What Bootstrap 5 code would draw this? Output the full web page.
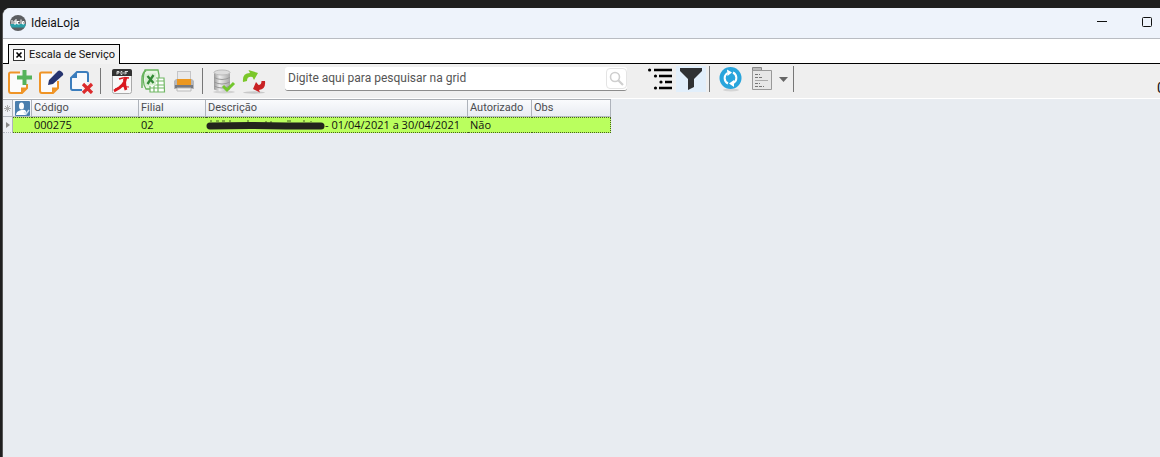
<!DOCTYPE html>
<html lang="pt-BR">
<head>
<meta charset="utf-8">
<meta name="viewport" content="width=device-width, initial-scale=1">
<title>IdeiaLoja</title>
<link href="https://cdn.jsdelivr.net/npm/bootstrap@5.3.0/dist/css/bootstrap.min.css" rel="stylesheet">
<style>
html{height:100%}
body{background:#1f1f1f;font-family:Roboto,"Open Sans",sans-serif;font-size:11px;line-height:16px;color:#111;padding:8px 0 0 2px}
button{padding:0;border:0;background:transparent}
.app-window{background:#e8ecf1;border-top-left-radius:8px;overflow:hidden;border-left:1px solid #555}
.title-bar{height:31px;background:#eef3fb;border-bottom:1px solid #b9bcc2;padding-left:7px}
.app-name{font-size:12px;line-height:16px;padding-left:5px}
.win-btn{width:45px;height:30px}
.win-controls{margin-right:-10px}
.tab-strip{height:25px;background:#fff;border-bottom:1px solid #000;padding:5px 5px 0}
.doc-tab{height:20px;margin-bottom:-1px;background:#f3f3f3;border:1px solid #000;border-bottom:0;padding:0 4px}
.tool-bar{height:35px;background:#efefef;border-bottom:1px solid #fff;padding-left:1px}
.tool-btn{width:31px;height:34px;flex:none;display:flex;align-items:center;justify-content:center}
.filter-btn{width:30px;height:26px;margin-bottom:4px;background:#e2effb}
.flag-btn{margin-bottom:4px}
.caret-btn{width:13px}
.tool-sep{width:1px;height:26px;background:#777;margin:0 5px 0 3px;flex:none}
.search-box{width:342px;height:24px;margin:0 18px 5px 15px;background:#fff;border-bottom:1px solid #8c8c8c;border-radius:3px}
.search-box input{border:0;outline:0;background:transparent;padding:0 0 0 3px;font-size:12px;line-height:20px;min-width:0}
.search-box input::placeholder{color:#555;opacity:1}
.search-btn{width:21px;height:21px;border:1px solid #e4e4e4;border-radius:4px;display:flex;align-items:center;justify-content:center}
.counter{width:3px;overflow:hidden;font-size:14px;padding-top:14px}
.data-grid{width:608px;table-layout:fixed;border-collapse:separate;border-spacing:0;border-top:1px solid #a9adb3}
.data-grid th,.data-grid td{line-height:16px;padding:0 2px;white-space:nowrap;overflow:hidden}
.data-grid th{font-weight:400;color:#4a4c50;background:linear-gradient(#fafbfd,#e9ecf2);border-right:1px solid #aeb3bb;border-bottom:1px solid #b5bac2}
.data-grid td{font-family:"Open Sans","Noto Sans",sans-serif;line-height:14px;background:#baff5e;border-top:1px dotted #466020;border-bottom:1px dotted #466020}
.data-grid td:last-child{border-right:1px dotted #466020}
.data-grid .row-mark{background:#eef0f4;border-color:#b5bac2;border-top:0;border-right:1px solid #aeb3bb;padding:0;text-align:center;color:#666}
.data-grid .icon-cell{padding:0}
.data-grid .glyph{display:block;margin:auto}
.redacted{flex:none}
</style>
<script src="https://cdn.jsdelivr.net/npm/bootstrap@5.3.0/dist/js/bootstrap.bundle.min.js"></script>
</head>
<body class="min-vh-100 d-flex flex-column">
<div class="app-window flex-grow-1">
  <header class="title-bar d-flex align-items-center">
    <svg width="16" height="16" viewBox="0 0 16 16" aria-hidden="true"><circle cx="8" cy="8" r="8" fill="#5c5e61"/><path d="M.3 9h15.400a8 8 0 0 1-1.200 3.500H1.500A8 8 0 0 1 .3 9z" fill="#2a9fa8"/><path d="M2 5v4M4 6h2v3H4zM6 4v5M7.500 6.500h2M7.500 6v3h2M11 4.500V9M12.500 6.500H14V9h-1.500z" stroke="#fff" fill="none"/></svg>
    <span class="app-name flex-grow-1">IdeiaLoja</span>
    <div class="win-controls d-flex">
      <button class="win-btn" aria-label="Minimizar"><svg width="11" height="11"><path d="M0 3.500h10" stroke="#111"/></svg></button>
      <button class="win-btn" aria-label="Maximizar"><svg width="11" height="13"><rect x=".5" y=".5" width="9" height="9" rx="1" fill="none" stroke="#111"/></svg></button>
    </div>
  </header>

  <nav class="tab-strip d-flex">
    <div class="doc-tab d-flex align-items-center">
      <button class="d-flex" aria-label="Fechar aba"><svg width="12" height="12"><rect x=".5" y=".5" width="11" height="11" fill="#fff" stroke="#333"/><path d="M3.500 3.500l5 5m0-5l-5 5" stroke="#000" stroke-width="1.600"/></svg></button>
      <span class="ps-1">Escala de Serviço</span>
    </div>
  </nav>

  <div class="tool-bar d-flex align-items-center">
    <button class="tool-btn" aria-label="Novo"><svg width="26" height="26" viewBox="0 0 26 26"><path d="M13 4.500H3.500Q2 4.500 2 6v16.500Q2 25 4 25h11l5-5v-4" fill="#fbfbfb" stroke="#ef9426" stroke-width="2"/><path d="M14 25v-5.500h6z" fill="#ef9426"/><path d="M15.500 2h4v5.500h5.500v4h-5.500V17h-4v-5.500H10v-4h5.500z" fill="#55b35b"/></svg></button>
    <button class="tool-btn" aria-label="Editar"><svg width="26" height="26" viewBox="0 0 26 26"><path d="M14 4.500H3.500Q2 4.500 2 6v16.500Q2 25 4 25h11l5-5v-7" fill="#fbfbfb" stroke="#ef9426" stroke-width="2"/><path d="M14 25v-5.500h6z" fill="#ef9426"/><path d="M10 17l1-5 9-9q1.500-1.500 4 1t0 4l-9 8z" fill="#26346f"/></svg></button>
    <button class="tool-btn" aria-label="Excluir"><svg width="26" height="26" viewBox="0 0 26 26"><path d="M13 22H3.500Q2 22 2 20V10l6-6h9q2 0 2 2v8" fill="#f7f9fc" stroke="#3b7dbd" stroke-width="2"/><path d="M2 10h6V4z" fill="#3b7dbd"/><path d="M14 16l9 9m0-9l-9 9" stroke="#dc2b2d" stroke-width="3.200"/></svg></button>
    <span class="tool-sep"></span>
    <button class="tool-btn" aria-label="Exportar PDF"><svg width="22" height="26" viewBox="0 0 22 26"><rect x="1.500" y="1.500" width="19" height="24" rx="2" fill="#f8f8f8" stroke="#aaa"/><path d="M1 3q0-2 2-2h16q2 0 2 2v5H1z" fill="#333"/><path d="M6 6.500v-3h2v1.500H6M10 3.500h1l1 1v1l-1 1h-1zM14 6.500v-3h3M14 5h2" stroke="#ddd" fill="none"/><path d="M8 11q6-2 10-1" fill="none" stroke="#d9181f" stroke-width="1.500"/><path d="M15 9q-1 9-12 14M13.500 11q0 7 1.500 11" fill="none" stroke="#d9181f" stroke-width="2.800"/><path d="M4 21q6-4 14-2" fill="none" stroke="#d9181f"/></svg></button>
    <button class="tool-btn" aria-label="Exportar Excel"><svg width="26" height="26" viewBox="0 0 26 26"><path d="M5 2h13l1 5v14H6q-5-8-1-19z" fill="#e9f5e5" stroke="#67b45c" stroke-width="1.300"/><path d="M2 20V11q0-6 4-8.500" fill="none" stroke="#67b45c" stroke-width="1.500"/><path d="M9 10h15l.5 14H10V18M10 20h14M18 10v14M14 13h10M14 17h10M14 18v6" fill="#fff" stroke="#70b764" stroke-width="1.200"/><path d="M5 6l11-1v12l-11 1z" fill="#d9efd3"/><path d="M7.500 8l6 7m0-8l-6 9" stroke="#338a36" stroke-width="2.300"/></svg></button>
    <button class="tool-btn" aria-label="Imprimir"><svg width="22" height="26" viewBox="0 0 22 26"><rect x="4.500" y="3.500" width="13" height="8" fill="#e9e9ea" stroke="#c5c5c7"/><path d="M3 11h16l2 2v8H1v-8z" fill="#b5b7bb"/><path d="M4 11h14v6H4z" fill="#ec9821"/><rect x="2" y="17" width="18" height="3" fill="#777a80"/><path d="M4 20h14v3H4z" fill="#f4f4f4" stroke="#bbb"/></svg></button>
    <span class="tool-sep"></span>
    <button class="tool-btn" aria-label="Gravar dados"><svg width="24" height="26" viewBox="0 0 24 26"><defs><linearGradient id="metal"><stop stop-color="#999"/><stop offset=".35" stop-color="#eee"/><stop offset="1" stop-color="#a7a7a7"/></linearGradient></defs><ellipse cx="12" cy="24" rx="11" ry="1.500" fill="#d2d2d2"/><path d="M2 4.500v17q8 4 16 0v-17z" fill="url(#metal)"/><ellipse cx="10" cy="4.500" rx="8" ry="2.500" fill="#ddd" stroke="#bbb"/><path d="M2 9.500q8 4 16 0M2 14q8 4 16 0M2 18q8 4 16 0" fill="none" stroke="#999"/><path d="M11 18l4 4 7-7" stroke="#73c62d" stroke-width="3" fill="none"/></svg></button>
    <button class="tool-btn" aria-label="Sincronizar"><svg width="26" height="26" viewBox="0 0 26 26"><ellipse cx="12" cy="24.500" rx="11" ry="1.200" fill="#c8c8c8"/><path d="M1 14Q0 5 8 5L6.500 2 16 5l-4 7-1.500-3Q5 8 5 13z" fill="#7bc729"/><path d="M23 13q1 8-6 9l1 2.500-7-3.500 3-7 2.500 3q3 0 3-4z" fill="#c92225"/></svg></button>
    <form class="search-box d-flex align-items-center" role="search">
      <input class="flex-grow-1" type="text" aria-label="Pesquisar na grid" placeholder="Digite aqui para pesquisar na grid">
      <button type="button" class="search-btn" aria-label="Pesquisar"><svg width="15" height="15" viewBox="0 0 15 15"><circle cx="6" cy="6" r="4.500" fill="none" stroke="#cfcfcf" stroke-width="1.600"/><path d="M9 9l5 5" stroke="#cfcfcf" stroke-width="2.200"/></svg></button>
    </form>
    <button class="tool-btn flag-btn" aria-label="Agrupar"><svg width="26" height="24" viewBox="0 0 26 24"><path d="M6 3h18M11 9h13M17 15h7M11 21h13" stroke="#000" stroke-width="2.600"/><g><circle cx="1.600" cy="3" r="1.600"/><circle cx="7.500" cy="9" r="1.600"/><circle cx="13" cy="15" r="1.600"/><circle cx="7.500" cy="21" r="1.600"/></g></svg></button>
    <button class="tool-btn filter-btn" aria-label="Filtrar" aria-pressed="true"><svg width="24" height="24" viewBox="0 0 24 24"><path d="M1 1h22v3l-8 8v8l-6 3V12L1 4z" fill="#303234"/></svg></button>
    <span class="tool-sep mb-1"></span>
    <button class="tool-btn flag-btn" aria-label="Atualizar"><svg width="24" height="26" viewBox="0 0 24 26"><ellipse cx="12" cy="24" rx="8" ry="1.500" fill="#d5d5d5"/><circle cx="11.500" cy="12" r="11" fill="#29a5dc"/><path d="M9 17.500A6 6 0 0 1 8.500 7M14 6.500A6 6 0 0 1 14.500 17" fill="none" stroke="#fff" stroke-width="2"/><path d="M8 3.500l5 3-4.500 3.500zM15 14v7l-5-3.500z" fill="#fff"/></svg></button>
    <button class="tool-btn flag-btn" aria-label="Opções"><svg width="22" height="26" viewBox="0 0 22 26"><path d="M1.500 1.500h9v4h-9z" fill="#bbb" stroke="#888"/><path d="M1.500 4.500h19v19h-19z" fill="#e7e7e7" stroke="#999"/><path d="M4 8.500h5M4 11.500h8M4 17.500h5M4 20.500h9" stroke="#777" stroke-dasharray="3 1"/><path d="M4 14.500h13" stroke="#aaa"/></svg></button>
    <button class="tool-btn caret-btn flag-btn" aria-label="Mais opções"><svg width="9" height="5"><path d="M0 0h9L4.500 5z" fill="#666"/></svg></button>
    <span class="tool-sep mb-1"></span>
    <span class="counter ms-auto">0</span>
  </div>

  <table class="data-grid">
    <colgroup><col style="width:10px"><col style="width:19px"><col style="width:107px"><col style="width:67px"><col style="width:262px"><col style="width:64px"><col style="width:79px"></colgroup>
    <thead><tr>
      <th class="row-mark"><svg class="glyph" width="7" height="7"><path d="M3.500 0v7M0 3.500h7M1 1l5 5m0-5L1 6" stroke="#aaa"/></svg></th>
      <th class="icon-cell"><svg class="glyph" width="15" height="15" viewBox="0 0 15 15"><rect width="15" height="15" rx="1" fill="#4b7fae"/><ellipse cx="6.500" cy="5" rx="2.500" ry="3.500" fill="#fff"/><path d="M1 14q0-4 5.500-5T11 13v1z" fill="#fff"/><path d="M9 11l2 2 3-4" fill="none" stroke="#cfe0f0" stroke-width="1.500"/></svg></th>
      <th>Código</th><th>Filial</th><th>Descrição</th><th>Autorizado</th><th>Obs</th>
    </tr></thead>
    <tbody><tr>
      <td class="row-mark"><svg class="glyph" width="4" height="6"><path d="M0 0l4 3-4 3z" fill="#888"/></svg></td>
      <td></td><td>000275</td><td>02</td>
      <td class="px-0"><div class="d-flex align-items-center"><svg class="redacted" width="119" height="10" viewBox="0 0 119 10" role="img" aria-label="Texto ocultado"><path d="M4 1h2M10 1h3M16 1h3M23 1h2M41 1h2M60 1v2M65 1v2M81 1h4M97 1h2M105 1v1" stroke="#47651f"/><path d="M4 6l40-.5L80 6h35" fill="none" stroke="#23251d" stroke-width="7" stroke-linecap="round" stroke-linejoin="round"/></svg><span>- 01/04/2021 a 30/04/2021</span></div></td>
      <td>Não</td><td></td>
    </tr></tbody>
  </table>
</div>
</body>
</html>
